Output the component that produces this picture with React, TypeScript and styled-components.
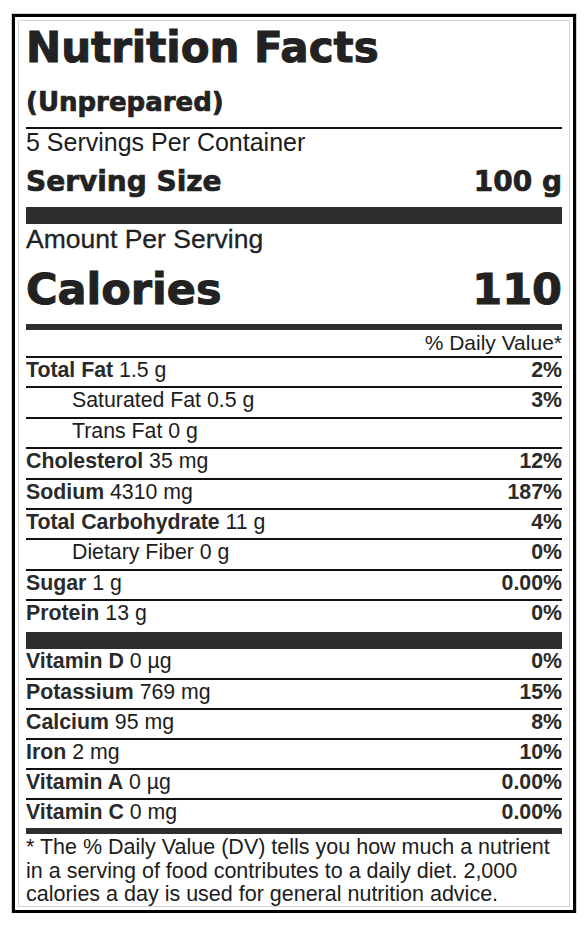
import React from 'react'
import styled, { createGlobalStyle } from 'styled-components'

const GlobalStyle = createGlobalStyle`
  html, body {
    margin: 0;
    padding: 0;
    background: #ffffff;
  }
  body {
    font-family: 'Liberation Sans', Arial, sans-serif;
    color: #1c1c1c;
  }
`

interface Nutrient {
  name: string
  amount: string
  percent?: string
  indent?: boolean
}

const mainNutrients: Nutrient[] = [
  { name: 'Total Fat', amount: '1.5 g', percent: '2%' },
  { name: 'Saturated Fat', amount: '0.5 g', percent: '3%', indent: true },
  { name: 'Trans Fat', amount: '0 g', indent: true },
  { name: 'Cholesterol', amount: '35 mg', percent: '12%' },
  { name: 'Sodium', amount: '4310 mg', percent: '187%' },
  { name: 'Total Carbohydrate', amount: '11 g', percent: '4%' },
  { name: 'Dietary Fiber', amount: '0 g', percent: '0%', indent: true },
  { name: 'Sugar', amount: '1 g', percent: '0.00%' },
  { name: 'Protein', amount: '13 g', percent: '0%' },
]

const vitamins: Nutrient[] = [
  { name: 'Vitamin D', amount: '0 µg', percent: '0%' },
  { name: 'Potassium', amount: '769 mg', percent: '15%' },
  { name: 'Calcium', amount: '95 mg', percent: '8%' },
  { name: 'Iron', amount: '2 mg', percent: '10%' },
  { name: 'Vitamin A', amount: '0 µg', percent: '0.00%' },
  { name: 'Vitamin C', amount: '0 mg', percent: '0.00%' },
]

const Page = styled.div`
  padding-top: 14px;
  padding-left: 12px;
`

const Label = styled.section`
  box-sizing: border-box;
  width: 564px;
  height: 899px;
  border: 3px solid #000;
  padding: 0 11px;
  box-shadow: 0 0 0 1px #cfcfcf, inset 0 0 0 3px #fff, inset 0 0 0 4px #d4d4d4;
  background: #fff;
`

const Heavy = styled.div`
  font-family: 'DejaVu Sans', 'Liberation Sans', sans-serif;
  font-weight: 700;
  color: #222;
  -webkit-text-stroke: 0.7px #222;
`

const Title = styled(Heavy)`
  margin-top: 10px;
  font-size: 42px;
  line-height: 42px;
  -webkit-text-stroke: 1px #222;
`

const Subtitle = styled(Heavy)`
  margin-top: 20px;
  font-size: 26px;
  line-height: 26px;
`

const Rule = styled.div<{ $size: number; $gap?: number }>`
  height: ${({ $size }) => $size}px;
  margin-top: ${({ $gap }) => $gap ?? 0}px;
  background: ${({ $size }) => ($size > 2 ? '#2e2e2e' : '#111')};
`

const Servings = styled.div`
  margin-top: 1px;
  font-size: 25px;
  line-height: 25px;
`

const ServingRow = styled(Heavy)`
  margin-top: 13px;
  display: flex;
  justify-content: space-between;
  font-size: 28px;
  line-height: 28px;
`

const AmountPer = styled.div`
  margin-top: 2px;
  font-size: 26.5px;
  line-height: 26px;
  color: #222;
  -webkit-text-stroke: 0.3px #222;
`

const CaloriesRow = styled(Heavy)`
  margin-top: 16px;
  display: flex;
  justify-content: space-between;
  font-size: 43px;
  line-height: 43px;
  -webkit-text-stroke: 1px #222;
`

const DailyHeader = styled.div`
  height: 25px;
  border-bottom: 2px solid #111;
  text-align: right;
  font-size: 21px;
  line-height: 23px;
  padding-top: 1px;
  box-sizing: content-box;
`

const Row = styled.div<{ $indent?: boolean; $height: number; $last?: boolean }>`
  display: flex;
  justify-content: space-between;
  align-items: flex-start;
  height: ${({ $height }) => $height}px;
  padding-left: ${({ $indent }) => ($indent ? 46 : 0)}px;
  border-bottom: ${({ $last }) => ($last ? 'none' : '2px solid #111')};
  font-size: 21.3px;
  line-height: 23.5px;
  padding-top: 1px;
  box-sizing: border-box;
`

const Name = styled.span<{ $bold: boolean }>`
  font-weight: ${({ $bold }) => ($bold ? 700 : 400)};
  color: ${({ $bold }) => ($bold ? '#2a2a2a' : 'inherit')};
`

const Percent = styled.span`
  font-weight: 700;
  color: #2a2a2a;
`

const Footnote = styled.p`
  margin: 0;
  padding-top: 2px;
  font-size: 21.5px;
  line-height: 23.5px;
`

const NutrientRow: React.FC<{ item: Nutrient; height: number; last?: boolean }> = ({
  item,
  height,
  last,
}) => (
  <Row $indent={item.indent} $height={height} $last={last}>
    <span>
      <Name $bold={!item.indent}>{item.name}</Name> {item.amount}
    </span>
    {item.percent && <Percent>{item.percent}</Percent>}
  </Row>
)

export default function App() {
  return (
    <Page>
      <GlobalStyle />
      <Label>
        <Title>Nutrition Facts</Title>
        <Subtitle>(Unprepared)</Subtitle>
        <Rule $size={2} $gap={12} />
        <Servings>5 Servings Per Container</Servings>
        <ServingRow>
          <span>Serving Size</span>
          <span>100 g</span>
        </ServingRow>
        <Rule $size={17} $gap={11} />
        <AmountPer>Amount Per Serving</AmountPer>
        <CaloriesRow>
          <span>Calories</span>
          <span>110</span>
        </CaloriesRow>
        <Rule $size={6} $gap={13} />
        <DailyHeader>% Daily Value*</DailyHeader>
        {mainNutrients.map((n, i) => (
          <NutrientRow
            key={n.name}
            item={n}
            height={i === mainNutrients.length - 1 ? 31 : 30.4}
            last={i === mainNutrients.length - 1}
          />
        ))}
        <Rule $size={17} />
        {vitamins.map((n, i) => (
          <NutrientRow
            key={n.name}
            item={n}
            height={i === 0 ? 31 : i === vitamins.length - 1 ? 28 : 30}
            last={i === vitamins.length - 1}
          />
        ))}
        <Rule $size={6} />
        <Footnote>
          * The % Daily Value (DV) tells you how much a nutrient in a serving of food
          contributes to a daily diet. 2,000 calories a day is used for general nutrition
          advice.
        </Footnote>
      </Label>
    </Page>
  )
}
